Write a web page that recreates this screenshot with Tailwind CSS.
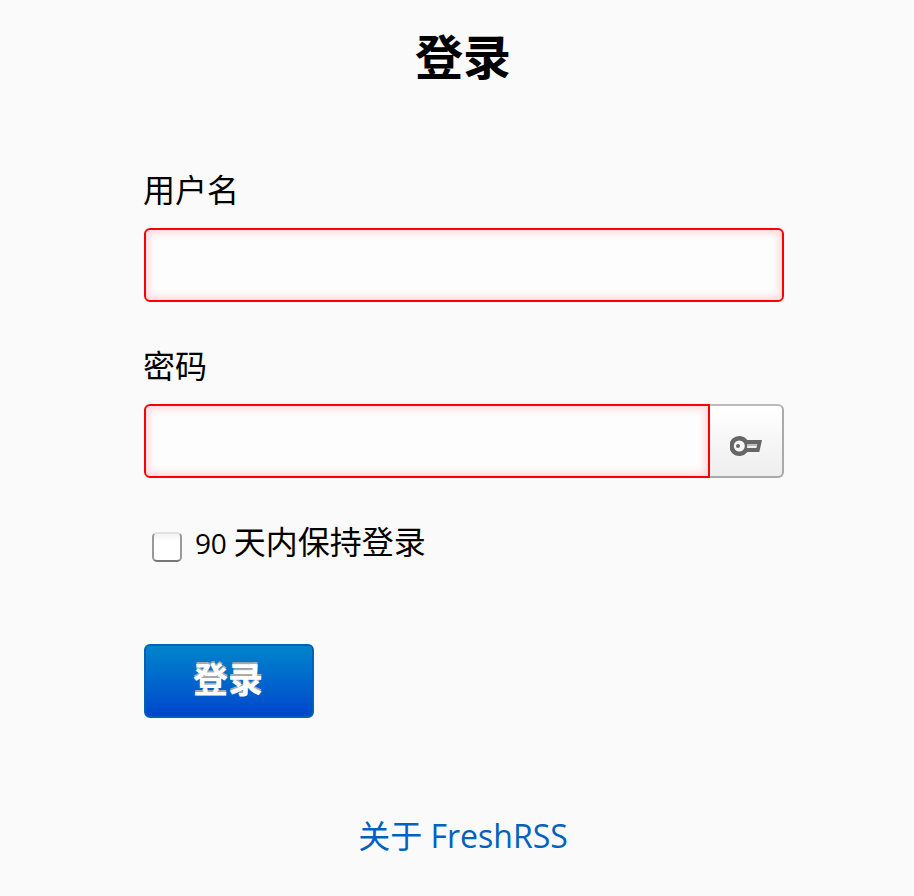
<!DOCTYPE html>
<html lang="zh-CN">
<head>
    <meta charset="UTF-8">
    <meta name="viewport" content="width=device-width, initial-scale=1.0">
    <title>登录 · FreshRSS</title>
    <script src="https://cdn.jsdelivr.net/npm/@tailwindcss/browser@4"></script>
</head>
<body class="bg-[#fafafa] h-screen overflow-hidden text-black text-[32px] leading-[48px] font-['Open_Sans','Noto_Sans_CJK_SC',sans-serif]">
    <main class="w-[640px] ml-36 pt-[21px]">
        <h1 class="-ml-[2px] text-center text-[48px] leading-[72px] font-bold">登录</h1>

        <form class="mt-[73px]">
            <!-- Username -->
            <label for="username" class="block -ml-px">用户名</label>
            <input id="username" type="text" class="block mt-[14px] w-full h-[74px] px-3 bg-[#fdfdfd] border-2 border-[#ff0000] rounded-[6px] shadow-[inset_0_0_6px_4px_#ffdddd] outline-none">

            <!-- Password -->
            <label for="password" class="block mt-[40px] -ml-px">密码</label>
            <div class="flex mt-[14px] h-[74px]">
                <input id="password" type="password" class="w-[566px] px-3 bg-[#fdfdfd] border-2 border-[#ff0000] rounded-l-[6px] shadow-[inset_0_0_6px_4px_#ffdddd] outline-none">
                <button type="button" class="flex-1 flex items-center justify-center border-2 border-l-0 border-t-[#bbb] border-r-[#aaa] border-b-[#aaa] rounded-r-[6px] bg-linear-to-b from-white to-[#eee]">
                    <svg class="w-8 h-8 mt-[10px]" viewBox="0 0 32 32">
                        <path d="M17.300 10H32L29.300 22H17.300A10 10 0 1 1 17.300 10Z" fill="#666"/>
                        <circle cx="9.300" cy="16" r="5.500" fill="#f6f6f6"/>
                        <circle cx="8" cy="16" r="2" fill="#666"/>
                        <path d="M17.500 14H27.300L26.400 18H17Z" fill="#f0f0f0"/>
                        <path d="M17.500 14H27.300L26.900 16H18Z" fill="#bbb"/>
                    </svg>
                </button>
            </div>

            <!-- Keep me logged in -->
            <label class="flex mt-[40px]">
                <input type="checkbox" class="appearance-none shrink-0 w-[30px] h-[30px] ml-2 mt-[14px] bg-linear-to-b from-[#f2f2f2] via-white via-30% to-white border-2 border-t-[#e2e2e2] border-x-[#999] border-b-[#777] rounded-[5px]">
                <span class="ml-[13px] whitespace-pre"><span class="text-[28px] tracking-[-0.2px]">90 </span>天内保持登录</span>
            </label>

            <button type="button" class="block mt-[77px] w-[170px] h-[74px] pr-[2px] pb-[3px] border-2 border-[#0062b7] rounded-[6px] bg-linear-to-b from-[#0084cc] to-[#0045cc] text-white text-[35px] font-bold [text-shadow:0_-2px_0_#aaa]">登录</button>
        </form>

        <p class="mt-[94px] -ml-[2px] text-center"><a href="#" class="text-[#0062be]">关于 FreshRSS</a></p>
    </main>
</body>
</html>
